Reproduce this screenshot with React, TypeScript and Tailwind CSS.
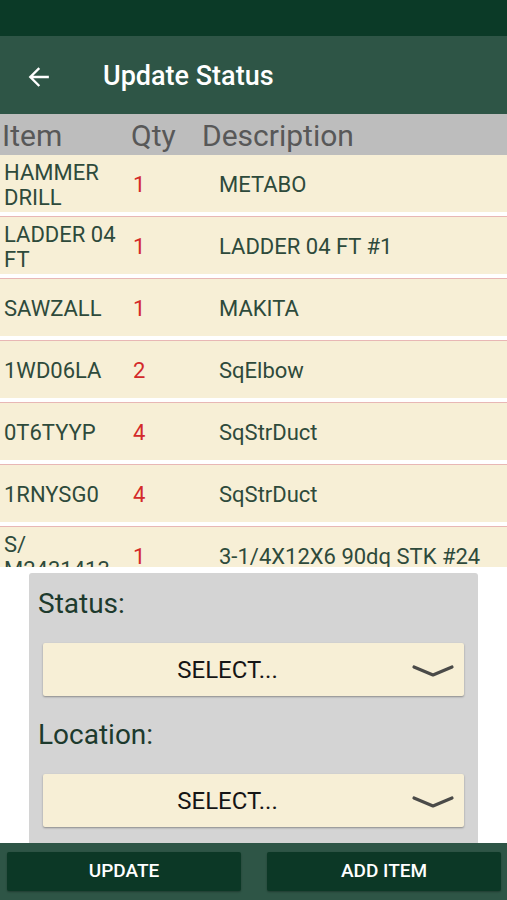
const rows = [
  { item: "HAMMER DRILL", qty: "1", desc: "METABO" },
  { item: "LADDER 04 FT", qty: "1", desc: "LADDER 04 FT #1" },
  { item: "SAWZALL", qty: "1", desc: "MAKITA" },
  { item: "1WD06LA", qty: "2", desc: "SqElbow" },
  { item: "0T6TYYP", qty: "4", desc: "SqStrDuct" },
  { item: "1RNYSG0", qty: "4", desc: "SqStrDuct" },
  { item: "S/M2431413", qty: "1", desc: "3-1/4X12X6 90dq STK #24" },
];

function Chevron() {
  return (
    <svg width="44" height="16" viewBox="0 0 44 16" fill="none">
      <path d="M3 4 L22 12 L41 4" stroke="#4a4a48" strokeWidth="3.2" strokeLinecap="round" strokeLinejoin="round" />
    </svg>
  );
}

function Spinner() {
  return (
    <div className="mx-[14px] flex h-[53px] items-center rounded-[2px] bg-[#f7efd6] shadow-[0_1px_2px_rgba(0,0,0,0.35)]">
      <span className="flex-1 pl-[10px] text-center text-[24px] text-[#151515]">SELECT...</span>
      <span className="flex w-[62px] justify-center pt-[2px]">
        <Chevron />
      </span>
    </div>
  );
}

export default function App() {
  return (
    <div className="flex h-[900px] w-[507px] flex-col overflow-hidden bg-white font-['Roboto',sans-serif]">
      <div className="h-[36px] bg-[#0b3a27]" />

      <div className="flex h-[78px] items-center bg-[#2e5546] pt-[3px] text-white">
        <svg className="ml-[26px]" width="26" height="26" viewBox="0 0 24 24" fill="none">
          <path d="M20 12H4.5M11.5 4.5L4 12l7.5 7.5" stroke="white" strokeWidth="2.2" strokeLinecap="square" />
        </svg>
        <span className="ml-[51px] text-[27px] font-medium">Update Status</span>
      </div>

      <div className="flex h-[41px] items-center bg-[#bdbdbd] pt-[3px] text-[30px] leading-none text-[#585858]">
        <span className="w-[131px] pl-[2px]">Item</span>
        <span className="w-[71px]">Qty</span>
        <span>Description</span>
      </div>

      <div className="h-[412px] overflow-hidden">
        {rows.map((row, i) => (
          <div key={i} className={i === 0 ? "" : "border-t border-[#e8b7b5]"}>
            <div className="flex h-[57px] items-center bg-[#f7efd6] pt-[2px] text-[22px] leading-[25px] text-[#2e4a3b]">
              <span className="w-[133px] pl-[4px] pr-[6px]">
                {row.item === "S/M2431413" ? (
                  <>
                    S/
                    <br />
                    M2431413
                  </>
                ) : (
                  row.item
                )}
              </span>
              <span className="w-[86px] text-[#d32a2a]">{row.qty}</span>
              <span>{row.desc}</span>
            </div>
            <div className="h-[4px] bg-white" />
          </div>
        ))}
      </div>

      <div className="mx-[29px] mt-[6px] flex h-[270px] flex-col rounded-t-[3px] bg-[#d4d4d4] pb-[16px]">
        <div className="pl-[9px] pt-[13px] text-[28px] leading-[36px] text-[#1d3a2d]">Status:</div>
        <div className="mt-[21px]">
          <Spinner />
        </div>
        <div className="mt-[21px] pl-[9px] text-[28px] leading-[36px] text-[#1d3a2d]">Location:</div>
        <div className="mt-[21px]">
          <Spinner />
        </div>
      </div>

      <div className="grid h-[57px] grid-cols-2 items-center gap-[26px] bg-[#2e5546] pl-[7px] pr-[6px]">
        <button className="h-[39px] rounded-[2px] bg-[#0c3826] text-[19px] font-medium text-white shadow-[0_1px_2px_rgba(0,0,0,0.3)]">
          UPDATE
        </button>
        <button className="h-[39px] rounded-[2px] bg-[#0c3826] text-[19px] font-medium text-white shadow-[0_1px_2px_rgba(0,0,0,0.3)]">
          ADD ITEM
        </button>
      </div>
    </div>
  );
}
